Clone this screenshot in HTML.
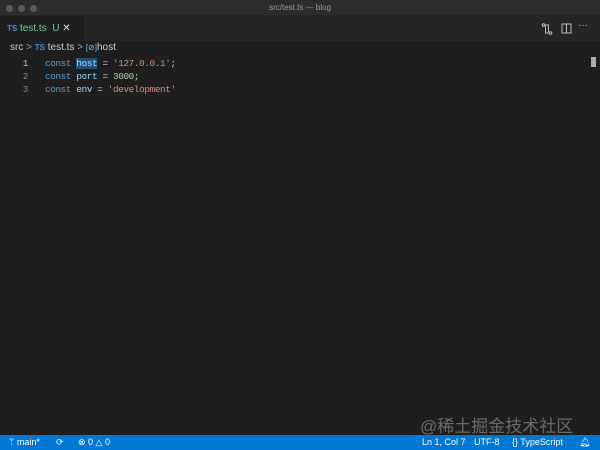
<!DOCTYPE html>
<html><head><style>
*{margin:0;padding:0;box-sizing:border-box}
body{width:600px;height:450px;background:#1e1e1e;font-family:"Liberation Sans",sans-serif;position:relative;overflow:hidden;color:#ccc}
.title{position:absolute;top:0;left:0;width:600px;height:16px;background:#2c2c2c;border-bottom:1px solid #252525}
.dot{position:absolute;top:5px;width:7px;height:7px;border-radius:50%;background:#5a5a5a}
.title span{position:absolute;left:0;width:600px;text-align:center;top:3px;font-size:8px;color:#999}
.tabs{position:absolute;top:16px;left:0;width:600px;height:25px;background:#252526}
.tab{position:absolute;left:0;top:0;height:25px;width:84px;background:#1e1e1e;font-size:10px;line-height:25px;padding-left:7px}
.bc{position:absolute;top:42px;left:10px;font-size:10px;color:#ccc}
.code{position:absolute;top:57px;left:0;font-family:"Liberation Mono",monospace;font-size:9.3px;letter-spacing:-0.35px;line-height:13px}
.ln{position:absolute;left:16px;width:12px;text-align:right;color:#858585}
.tx{position:absolute;left:45px;white-space:pre;color:#d4d4d4}
.k{color:#569cd6}.v{color:#9cdcfe}.s{color:#ce9178}.n{color:#b5cea8}
.status{position:absolute;top:435px;left:0;width:600px;height:15px;background:#0078d4;color:#fff;font-size:9px;line-height:15px}
.status span{position:absolute}
.wm{position:absolute;left:420px;top:412px;font-size:17px;color:rgba(200,200,200,0.45);font-family:"Liberation Sans","Noto Sans CJK SC",sans-serif}
</style></head><body>
<div class="title"><div class="dot" style="left:6px"></div><div class="dot" style="left:18px"></div><div class="dot" style="left:30px"></div><span>src/test.ts — blog</span></div>
<div class="tabs"><div class="tab"><span style="color:#3b8fd6;font-size:8px;font-weight:bold">TS</span> <span style="color:#73c991">test.ts</span> &nbsp;<span style="color:#73c991">U</span> <span style="color:#ddd">✕</span></div>
<svg style="position:absolute;left:541px;top:7px" width="12" height="12" viewBox="0 0 12 12" fill="none" stroke="#bbb" stroke-width="1"><circle cx="2.5" cy="2" r="1.3"/><circle cx="9.5" cy="10" r="1.3"/><path d="M4 2h3.5v7M8 10H4.5v-7"/></svg>
<svg style="position:absolute;left:561px;top:7px" width="11" height="11" viewBox="0 0 11 11" fill="none" stroke="#bbb" stroke-width="1"><rect x="1" y="1" width="9" height="9"/><path d="M5.5 1v9"/></svg>
<span style="position:absolute;left:578px;top:4px;color:#bbb;font-size:10px">···</span></div>
<div class="bc">src <span style="color:#999">&gt;</span> <span style="color:#3b8fd6;font-size:8px;font-weight:bold">TS</span> test.ts <span style="color:#999">&gt;</span> <span style="color:#75beff;font-size:8px">[⊘]</span>host</div>
<div style="position:absolute;left:591px;top:57px;width:5px;height:10px;background:#aaa"></div>
<div class="code">
<div class="ln" style="top:0;color:#c6c6c6">1</div><div class="tx" style="top:0"><span class="k">const</span> <span class="v" style="background:#264f78">host</span> = <span class="s">'127.0.0.1'</span>;</div>
<div class="ln" style="top:13px">2</div><div class="tx" style="top:13px"><span class="k">const</span> <span class="v">port</span> = <span class="n">3000</span>;</div>
<div class="ln" style="top:26px">3</div><div class="tx" style="top:26px"><span class="k">const</span> <span class="v">env</span> = <span class="s">'development'</span></div>
</div>
<div class="wm">@稀土掘金技术社区</div>
<div class="status"><span style="left:9px">ᛘ main*</span><span style="left:56px">⟳</span><span style="left:78px">⊗ 0 △ 0</span><span style="left:422px">Ln 1, Col 7</span><span style="left:474px">UTF-8</span><span style="left:512px">{} TypeScript</span><span style="left:579px">🔔︎</span></div>
</body></html>
